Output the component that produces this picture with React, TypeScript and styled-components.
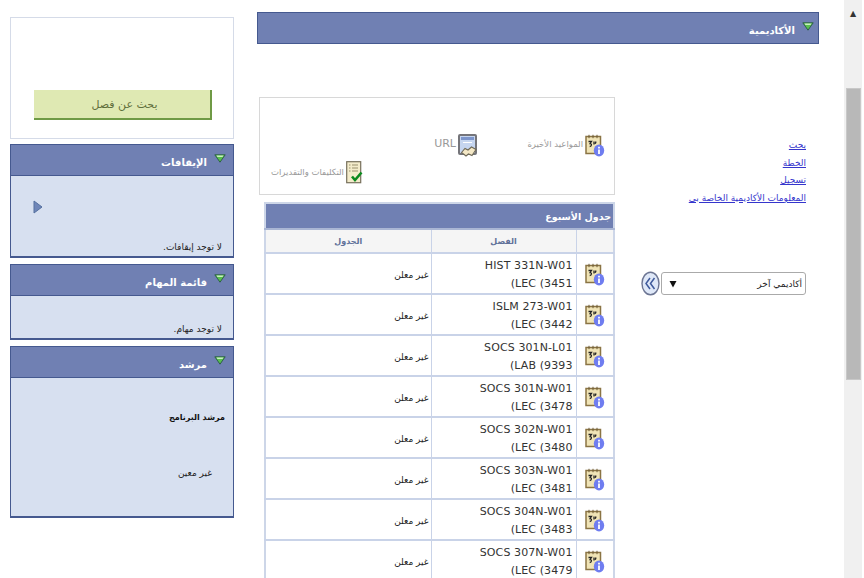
import React from "react";
import styled, { createGlobalStyle } from "styled-components";

const GlobalStyle = createGlobalStyle`
  html, body {
    margin: 0;
    padding: 0;
    background: #fff;
    overflow: hidden;
  }
  body {
    font-family: "DejaVu Sans", "Liberation Sans", sans-serif;
    font-size: 10px;
    color: #222;
  }
`;

const classes = [
  ["HIST 331N-W01", "(LEC (3451"],
  ["ISLM 273-W01", "(LEC (3442"],
  ["SOCS 301N-L01", "(LAB (9393"],
  ["SOCS 301N-W01", "(LEC (3478"],
  ["SOCS 302N-W01", "(LEC (3480"],
  ["SOCS 303N-W01", "(LEC (3481"],
  ["SOCS 304N-W01", "(LEC (3483"],
  ["SOCS 307N-W01", "(LEC (3479"],
];

const links = ["بحث", "الخطة", "تسجيل", "المعلومات الأكاديمية الخاصة بي"];

function GreenTriangle() {
  return (
    <svg width="12" height="9" viewBox="0 0 12 9">
      <path d="M0.8 0.8H11.2L6 8.2Z" fill="#58c04f" stroke="#2f5f4a" strokeWidth="1" />
      <path d="M2.5 1.6H9.5L8.6 3H3.4Z" fill="#c9f0c0" />
    </svg>
  );
}

function CalendarInfo() {
  return (
    <svg width="20" height="23" viewBox="0 0 20 23">
      <rect x="1" y="2.5" width="14.5" height="17" fill="#f0e4b6" stroke="#8a7444" strokeWidth="1.5" />
      <path d="M4 0.8v3.4M8 0.8v3.4M12 0.8v3.4" stroke="#6d5a34" strokeWidth="1" />
      <path d="M3.5 7.5h3l-1.4 2c1.8 0 1.8 3-.4 3M9 7.5v3M11 7.5l-.7 2.2" fill="none" stroke="#222" strokeWidth="1.3" />
      <ellipse cx="14" cy="16.5" rx="5.2" ry="6" fill="#6f7df0" />
      <path d="M14 12.8v1.6M14 15.6v4.4" stroke="#fff" strokeWidth="1.8" />
    </svg>
  );
}

function UrlIcon() {
  return (
    <svg width="20" height="23" viewBox="0 0 20 23">
      <rect x="1" y="1" width="17" height="19" rx="1" fill="#c6d6f0" stroke="#75757a" strokeWidth="2" />
      <rect x="3" y="3" width="13" height="3" fill="#7d96cc" />
      <path d="M5 8.5h9" stroke="#fff" strokeWidth="1" />
      <path d="M3.5 18.5l3.5-4 3 1.5 3.5-3 4.5 2.5-4 6-3.5-1.5-2.5 2z" fill="#f4e8c6" stroke="#6f6a58" strokeWidth="1.1" />
    </svg>
  );
}

function ChecklistIcon() {
  return (
    <svg width="17" height="23" viewBox="0 0 17 23">
      <rect x="0.7" y="0.7" width="14" height="21" fill="#f4eccb" stroke="#77705c" strokeWidth="1.2" />
      <path d="M3 4h1.5M6 4h6M3 7h1.5M6 7h6M3 10h1.5M6 10h6" stroke="#9a916f" strokeWidth="1" />
      <path d="M6 15.5l3 3.5 6.5-7.5" fill="none" stroke="#0c8a1f" strokeWidth="2.6" />
    </svg>
  );
}

function DoubleChevron() {
  return (
    <svg width="19" height="25" viewBox="0 0 19 25">
      <ellipse cx="9.5" cy="12.5" rx="8.5" ry="11.3" fill="#dfe8f8" stroke="#6c7593" strokeWidth="1.4" />
      <path d="M9 7l-4 5.5 4 5.5M13.5 7l-4 5.5 4 5.5" fill="none" stroke="#3f5a9c" strokeWidth="1.5" />
    </svg>
  );
}

function SelectArrow() {
  return (
    <svg width="8" height="8" viewBox="0 0 8 8">
      <path d="M0.5 1H7.5L4 7.5Z" fill="#111" />
    </svg>
  );
}

function PlayArrow() {
  return (
    <svg width="10" height="14" viewBox="0 0 10 14">
      <path d="M1 1L9 7L1 13Z" fill="#6f86b8" stroke="#54709f" strokeWidth="1" />
    </svg>
  );
}

export default function App() {
  return (
    <Page dir="rtl">
      <GlobalStyle />
      <ScrollBar>
        <ScrollUp>▲</ScrollUp>
        <ScrollThumb />
      </ScrollBar>

      <Main>
        <PanelHeader $inset={4}>
          <GreenTriangle />
          <PanelTitle>الأكاديمية</PanelTitle>
        </PanelHeader>
        <Columns>
          <LinksColumn>
            <LinkList>
              {links.map((l) => (
                <NavLink key={l} href="#">{l}</NavLink>
              ))}
            </LinkList>
            <SelectRow>
              <FakeSelect>
                <span>أكاديمي آخر</span>
                <SelectArrow />
              </FakeSelect>
              <CircleButton>
                <DoubleChevron />
              </CircleButton>
            </SelectRow>
          </LinksColumn>

          <ContentColumn>
            <ActionBox>
              <ActionRow $height={28}>
                <ActionItem $width={127}>
                  <CalendarInfo />
                  <ActionLabel $lift={3}>المواعيد الأخيرة</ActionLabel>
                </ActionItem>
                <ActionItem>
                  <UrlIcon />
                  <ActionLabel $size={11} $lift={3}>URL</ActionLabel>
                </ActionItem>
              </ActionRow>
              <ActionRow $height={26}>
                <ActionItem $indent={242}>
                  <ChecklistIcon />
                  <ActionLabel>التكليفات والتقديرات</ActionLabel>
                </ActionItem>
              </ActionRow>
            </ActionBox>

            <Schedule>
              <colgroup>
                <Column $width={38} />
                <Column $width={145} />
                <Column />
              </colgroup>
              <thead>
                <tr>
                  <ScheduleTitle colSpan={3}>جدول الأسبوع</ScheduleTitle>
                </tr>
                <tr>
                  <HeadCell />
                  <HeadCell>الفصل</HeadCell>
                  <HeadCell>الجدول</HeadCell>
                </tr>
              </thead>
              <tbody>
                {classes.map(([code, section]) => (
                  <tr key={section}>
                    <IconCell>
                      <CalendarInfo />
                    </IconCell>
                    <ClassCell>
                      <span>{code}</span>
                      <span>{section}</span>
                    </ClassCell>
                    <PlainCell>غير معلن</PlainCell>
                  </tr>
                ))}
              </tbody>
            </Schedule>
          </ContentColumn>
        </Columns>
      </Main>

      <Sidebar>
        <SearchBox>
          <SearchButton>بحث عن فصل</SearchButton>
        </SearchBox>
        <Panel>
          <PanelHeader $inset={7}>
            <GreenTriangle />
            <PanelTitle>الإيقافات</PanelTitle>
          </PanelHeader>
          <PanelBody $height={80}>
            <ArrowSlot>
              <PlayArrow />
            </ArrowSlot>
            <Note>لا توجد إيقافات.</Note>
          </PanelBody>
        </Panel>
        <Panel>
          <PanelHeader $inset={7}>
            <GreenTriangle />
            <PanelTitle>قائمة المهام</PanelTitle>
          </PanelHeader>
          <PanelBody $height={42}>
            <Note>لا توجد مهام.</Note>
          </PanelBody>
        </Panel>
        <Panel>
          <PanelHeader $inset={7}>
            <GreenTriangle />
            <PanelTitle>مرشد</PanelTitle>
          </PanelHeader>
          <PanelBody $height={138}>
            <AdvisorRole>مرشد البرنامج</AdvisorRole>
            <AdvisorName>غير معين</AdvisorName>
          </PanelBody>
        </Panel>
      </Sidebar>
    </Page>
  );
}

const Page = styled.div`
  display: flex;
  align-items: flex-start;
  width: 864px;
  height: 578px;
  overflow: hidden;
  box-sizing: border-box;
  padding-right: 2px;
`;

const ScrollBar = styled.div`
  flex: none;
  width: 18px;
  height: 578px;
  background: #f0f0f0;
  display: flex;
  flex-direction: column;
  align-items: center;
`;

const ScrollUp = styled.div`
  height: 88px;
  font-size: 8px;
  line-height: 28px;
  color: #333;
`;

const ScrollThumb = styled.div`
  width: 15px;
  height: 292px;
  background: #b8b8b8;
  border: 1px solid #c8c8c8;
  box-sizing: border-box;
`;

const Main = styled.main`
  flex: none;
  width: 562px;
  margin-right: 25px;
  padding-top: 12px;
`;

const PanelHeader = styled.div<{ $inset: number }>`
  display: flex;
  align-items: center;
  gap: 7px;
  box-sizing: border-box;
  height: 32px;
  padding: 0 ${(p) => p.$inset}px 4px 4px;
  background: #7080b3;
  border: 1px solid #45598f;
`;

const PanelTitle = styled.div`
  color: #fff;
  font-size: 10px;
  font-weight: bold;
  padding-top: 8px;
`;

const Columns = styled.div`
  display: flex;
`;

const LinksColumn = styled.div`
  flex: none;
  width: 191px;
  padding: 93px 13px 0 0;
`;

const LinkList = styled.div`
  display: flex;
  flex-direction: column;
  align-items: flex-start;
`;

const NavLink = styled.a`
  color: #3535cc;
  font-size: 9px;
  line-height: 17.6px;
  text-decoration: underline;
`;

const SelectRow = styled.div`
  display: flex;
  align-items: center;
  gap: 1px;
  margin-top: 64px;
`;

const FakeSelect = styled.div`
  display: flex;
  align-items: center;
  justify-content: space-between;
  box-sizing: border-box;
  width: 145px;
  height: 23px;
  padding: 0 3px 0 7px;
  background: #fff;
  border: 1px solid #aaa;
  border-radius: 3px;
  font-size: 9px;
  color: #222;
`;

const CircleButton = styled.div`
  display: flex;
  height: 25px;
`;

const ContentColumn = styled.div`
  flex: none;
  width: 356px;
  padding-top: 53px;
  display: flex;
  flex-direction: column;
`;

const ActionBox = styled.div`
  box-sizing: border-box;
  height: 98px;
  border: 1px solid #d8d8d8;
  padding-top: 33px;
`;

const ActionRow = styled.div<{ $height: number }>`
  display: flex;
  align-items: center;
  height: ${(p) => p.$height}px;
  padding-right: 9px;
`;

const ActionItem = styled.div<{ $width?: number; $indent?: number }>`
  display: flex;
  align-items: center;
  gap: 2px;
  white-space: nowrap;
  width: ${(p) => (p.$width ? `${p.$width}px` : "auto")};
  margin-right: ${(p) => p.$indent ?? 0}px;
`;

const ActionLabel = styled.span<{ $size?: number; $lift?: number }>`
  color: #999;
  font-size: ${(p) => p.$size ?? 8.5}px;
  padding-bottom: ${(p) => p.$lift ?? 0}px;
`;

const Schedule = styled.table`
  width: 351px;
  margin-top: 7px;
  border-collapse: collapse;
  table-layout: fixed;
  border: 2px solid #cdd6e8;
`;

const Column = styled.col<{ $width?: number }>`
  width: ${(p) => (p.$width ? `${p.$width}px` : "auto")};
`;

const ScheduleTitle = styled.th`
  height: 24px;
  padding: 0 2px;
  background: #7080b3;
  color: #fff;
  font-size: 9.5px;
  font-weight: bold;
  text-align: right;
  border-bottom: 2px solid #aab6d4;
`;

const HeadCell = styled.th`
  height: 22px;
  padding: 0;
  background: #f5f5f5;
  color: #5f7199;
  font-size: 8px;
  font-weight: bold;
  border: 1px solid #c9d3e8;
  border-bottom-width: 2px;
`;

const IconCell = styled.td`
  height: 39px;
  padding: 0;
  border: 1px solid #c9d3e8;
  border-bottom-width: 2px;

  svg {
    display: block;
    margin: 2px 8px 0 0;
  }
`;

const ClassCell = styled.td`
  padding: 3px 3px 0;
  border: 1px solid #c9d3e8;
  border-bottom-width: 2px;
  color: #333;
  font-size: 11px;
  line-height: 18px;
  letter-spacing: 0.1px;

  span {
    display: block;
    direction: ltr;
    text-align: right;
  }
`;

const PlainCell = styled.td`
  padding: 3px 2px 0;
  border: 1px solid #c9d3e8;
  border-bottom-width: 2px;
  font-size: 9px;
  color: #222;
`;

const Sidebar = styled.aside`
  flex: none;
  width: 224px;
  margin-right: 23px;
  padding-top: 17px;
  display: flex;
  flex-direction: column;
`;

const SearchBox = styled.div`
  box-sizing: border-box;
  height: 122px;
  margin-bottom: 5px;
  padding: 72px 21px 0 0;
  border: 1px solid #d5dbe8;
`;

const SearchButton = styled.div`
  box-sizing: border-box;
  width: 178px;
  height: 30px;
  display: flex;
  align-items: center;
  justify-content: center;
  padding-left: 5px;
  background: #dfe9b3;
  border-right: 2px solid #6f9a45;
  border-bottom: 2px solid #6f9a45;
  color: #5f6f3c;
  font-size: 11px;
`;

const Panel = styled.section`
  margin-bottom: 6px;
`;

const PanelBody = styled.div<{ $height: number }>`
  position: relative;
  box-sizing: border-box;
  height: ${(p) => p.$height + 2}px;
  background: #d7e0f0;
  border: 1px solid #45598f;
  border-top: 0;
  border-bottom-width: 2px;
  display: flex;
  flex-direction: column;
  padding: 0 11px 4px;
`;

const ArrowSlot = styled.div`
  position: absolute;
  top: 24px;
  left: 22px;
`;

const Note = styled.div`
  margin-top: auto;
  font-size: 9px;
  color: #222;
`;

const AdvisorRole = styled.div`
  margin-top: 35px;
  margin-right: -3px;
  font-size: 8px;
  font-weight: bold;
  color: #111;
`;

const AdvisorName = styled.div`
  margin-top: 46px;
  margin-right: 10px;
  font-size: 9px;
  color: #222;
`;
